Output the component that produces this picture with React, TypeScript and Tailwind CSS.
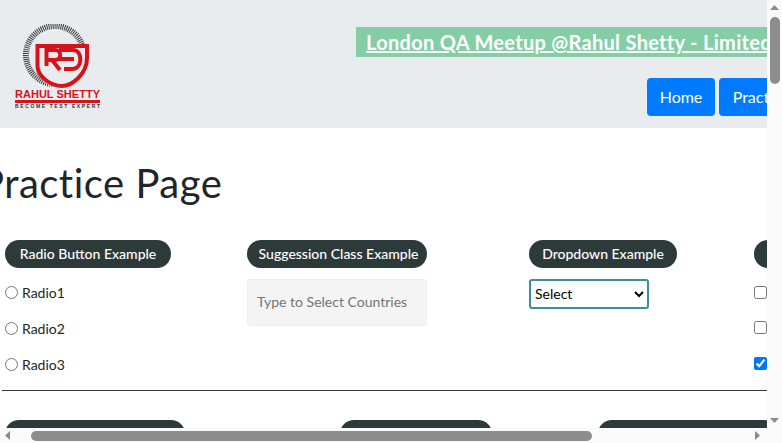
import React from 'react'

const Logo: React.FC = () => {
    return (
    <svg width="87" height="84" viewBox="14 24 87 84" className="block">
        <circle cx="55" cy="55" r="29" fill="none" stroke="#3a3a3a" strokeWidth="6" strokeDasharray="1 1" />
        <path d="M35 44 H89 V60 C89 76 72 88 60 88 C48 88 35 76 35 66 Z" fill="#e9ecef" />
        <path d="M37.500 46 H87 V58 C87 74 72 86 62 86 C50 86 37.500 76 37.500 66 Z" fill="#e9ecef" stroke="#d8121a" strokeWidth="4" />
        <path d="M46.500 66 V50 H55 C62 50 62 60 55 60 H45 M52 60 L60 70" fill="none" stroke="#d8121a" strokeWidth="4" />
        <path d="M59 50 H73 C83 50 83 69 72 69 H64 M58 59 H74" fill="none" stroke="#d8121a" strokeWidth="4" />
        <text x="15" y="98" fontFamily="'Liberation Sans', sans-serif" fontSize="10" fontWeight="bold" fill="#d8121a" textLength="85" lengthAdjust="spacingAndGlyphs">RAHUL SHETTY</text>
        <rect x="15" y="100" width="85" height="3" fill="#d8121a" />
        <text x="15" y="108" fontFamily="'Liberation Sans', sans-serif" fontSize="5" fontWeight="bold" fill="#333" textLength="85">BECOME TEST EXPERT</text>
    </svg>
    );
};

const Legend: React.FC<{ label?: string; className: string }> = ({ label, className }) => {
    return (
    <div className={`h-7 rounded-[14px] bg-[#2d3a3a] text-white text-sm font-medium leading-7 whitespace-nowrap overflow-hidden ${className}`}>
        {label}
    </div>
    );
};

const Arrow: React.FC<{ points: string }> = ({ points }) => (
    <svg width="9" height="9" viewBox="0 0 9 9" className="shrink-0"><polygon points={points} fill="#8a8a8a" /></svg>
);

export default function App() {
    return (
    <div className="w-[782px] h-[443px] overflow-hidden flex flex-col bg-white text-[#212529] font-['Lato','Liberation_Sans',sans-serif]">
        <div className="flex flex-1 min-h-0">
            <div className="flex-1 min-w-0 overflow-hidden">
                <header className="h-32 bg-[#e9ecef] flex">
                    <div className="pl-[14px] pt-[24px] w-[356px] shrink-0">
                        <Logo />
                    </div>
                    <div className="flex-1 min-w-0 pt-[27px]">
                        <div className="h-[30px] bg-[#85cea5] pl-[10px] text-white text-xl font-bold underline tracking-[0.3px] leading-[30px] whitespace-nowrap overflow-hidden">
                            London QA Meetup @Rahul Shetty - Limited
                        </div>
                        <div className="flex gap-1 pl-[291px] pt-[21px] text-white text-base">
                            <div className="w-[68px] h-[38px] shrink-0 rounded bg-[#007bff] flex items-center justify-center">Home</div>
                            <div className="w-[84px] h-[38px] shrink-0 rounded bg-[#007bff] flex items-center justify-center">Practice</div>
                        </div>
                    </div>
                </header>

                <h1 className="ml-[-20px] mt-[29px] text-[40px] leading-[52px] tracking-[0.5px] text-[#212529] whitespace-nowrap">Practice Page</h1>

                <div className="flex pl-[5px] pt-[31px] h-[181px]">
                    <div className="w-[242px] shrink-0">
                        <Legend label="Radio Button Example" className="w-[166px] text-center" />
                        <div className="flex flex-col gap-[18px] pt-4 text-sm leading-[18px]">
                            {['Radio1', 'Radio2', 'Radio3'].map(label => (
                                <label key={label} className="flex items-center gap-1">
                                    <input type="radio" name="radio" className="w-[13px] h-[13px] m-0 -translate-y-px" />
                                    {label}
                                </label>
                            ))}
                        </div>
                    </div>
                    <div className="w-[282px] shrink-0">
                        <Legend label="Suggession Class Example" className="w-[180px] text-center pl-[3px]" />
                        <input placeholder="Type to Select Countries" className="mt-[11px] w-[180px] h-[47px] pl-[9px] pr-[10px] pb-[3px] bg-[#f4f4f4] border border-[#eeeeee] rounded-[3px] text-sm placeholder:text-[#757575]" />
                    </div>
                    <div className="w-[225px] shrink-0">
                        <Legend label="Dropdown Example" className="w-[148px] text-center" />
                        <select className="mt-[11px] w-[120px] h-[30px] pb-[2px] border-2 border-[#3d8f96] rounded-[3px] bg-white text-sm text-black font-['Lato',sans-serif]">
                            <option>Select</option>
                        </select>
                    </div>
                    <div className="flex-1 min-w-0">
                        <Legend className="w-[60px]" />
                        <div className="flex flex-col gap-[22px] pt-[18px]">
                            <input type="checkbox" className="w-[13px] h-[13px] m-0" />
                            <input type="checkbox" className="w-[13px] h-[13px] m-0" />
                            <input type="checkbox" defaultChecked className="w-[13px] h-[13px] m-0 mt-[1px]" />
                        </div>
                    </div>
                </div>

                <div className="ml-[2px] border-t border-[#2d3a3a]"></div>

                <div className="flex pl-[5px] pt-[29px]">
                    <Legend className="w-[180px] shrink-0" />
                    <Legend className="w-[152px] ml-[155px] shrink-0" />
                    <Legend className="w-[180px] ml-[106px] shrink-0" />
                </div>
            </div>
            <div className="w-[15px] shrink-0 bg-[#fafafa] flex flex-col items-center justify-between py-[3px]">
                <div className="flex flex-col items-center gap-[5px]">
                    <Arrow points="4.500,2 9,7 0,7" />
                    <div className="w-[10px] h-[67px] rounded-full bg-[#8d8d8d]"></div>
                </div>
                <Arrow points="0,2 9,2 4.500,7" />
            </div>
        </div>
        <div className="h-[15px] shrink-0 bg-[#fafafa] flex items-center pl-[3px] pr-[20px]">
            <Arrow points="7,0 7,9 2,4.500" />
            <div className="ml-[19px] w-[561px] h-[10px] rounded-full bg-[#8d8d8d]"></div>
            <div className="ml-auto"><Arrow points="2,0 2,9 7,4.500" /></div>
        </div>
    </div>
    );
}
